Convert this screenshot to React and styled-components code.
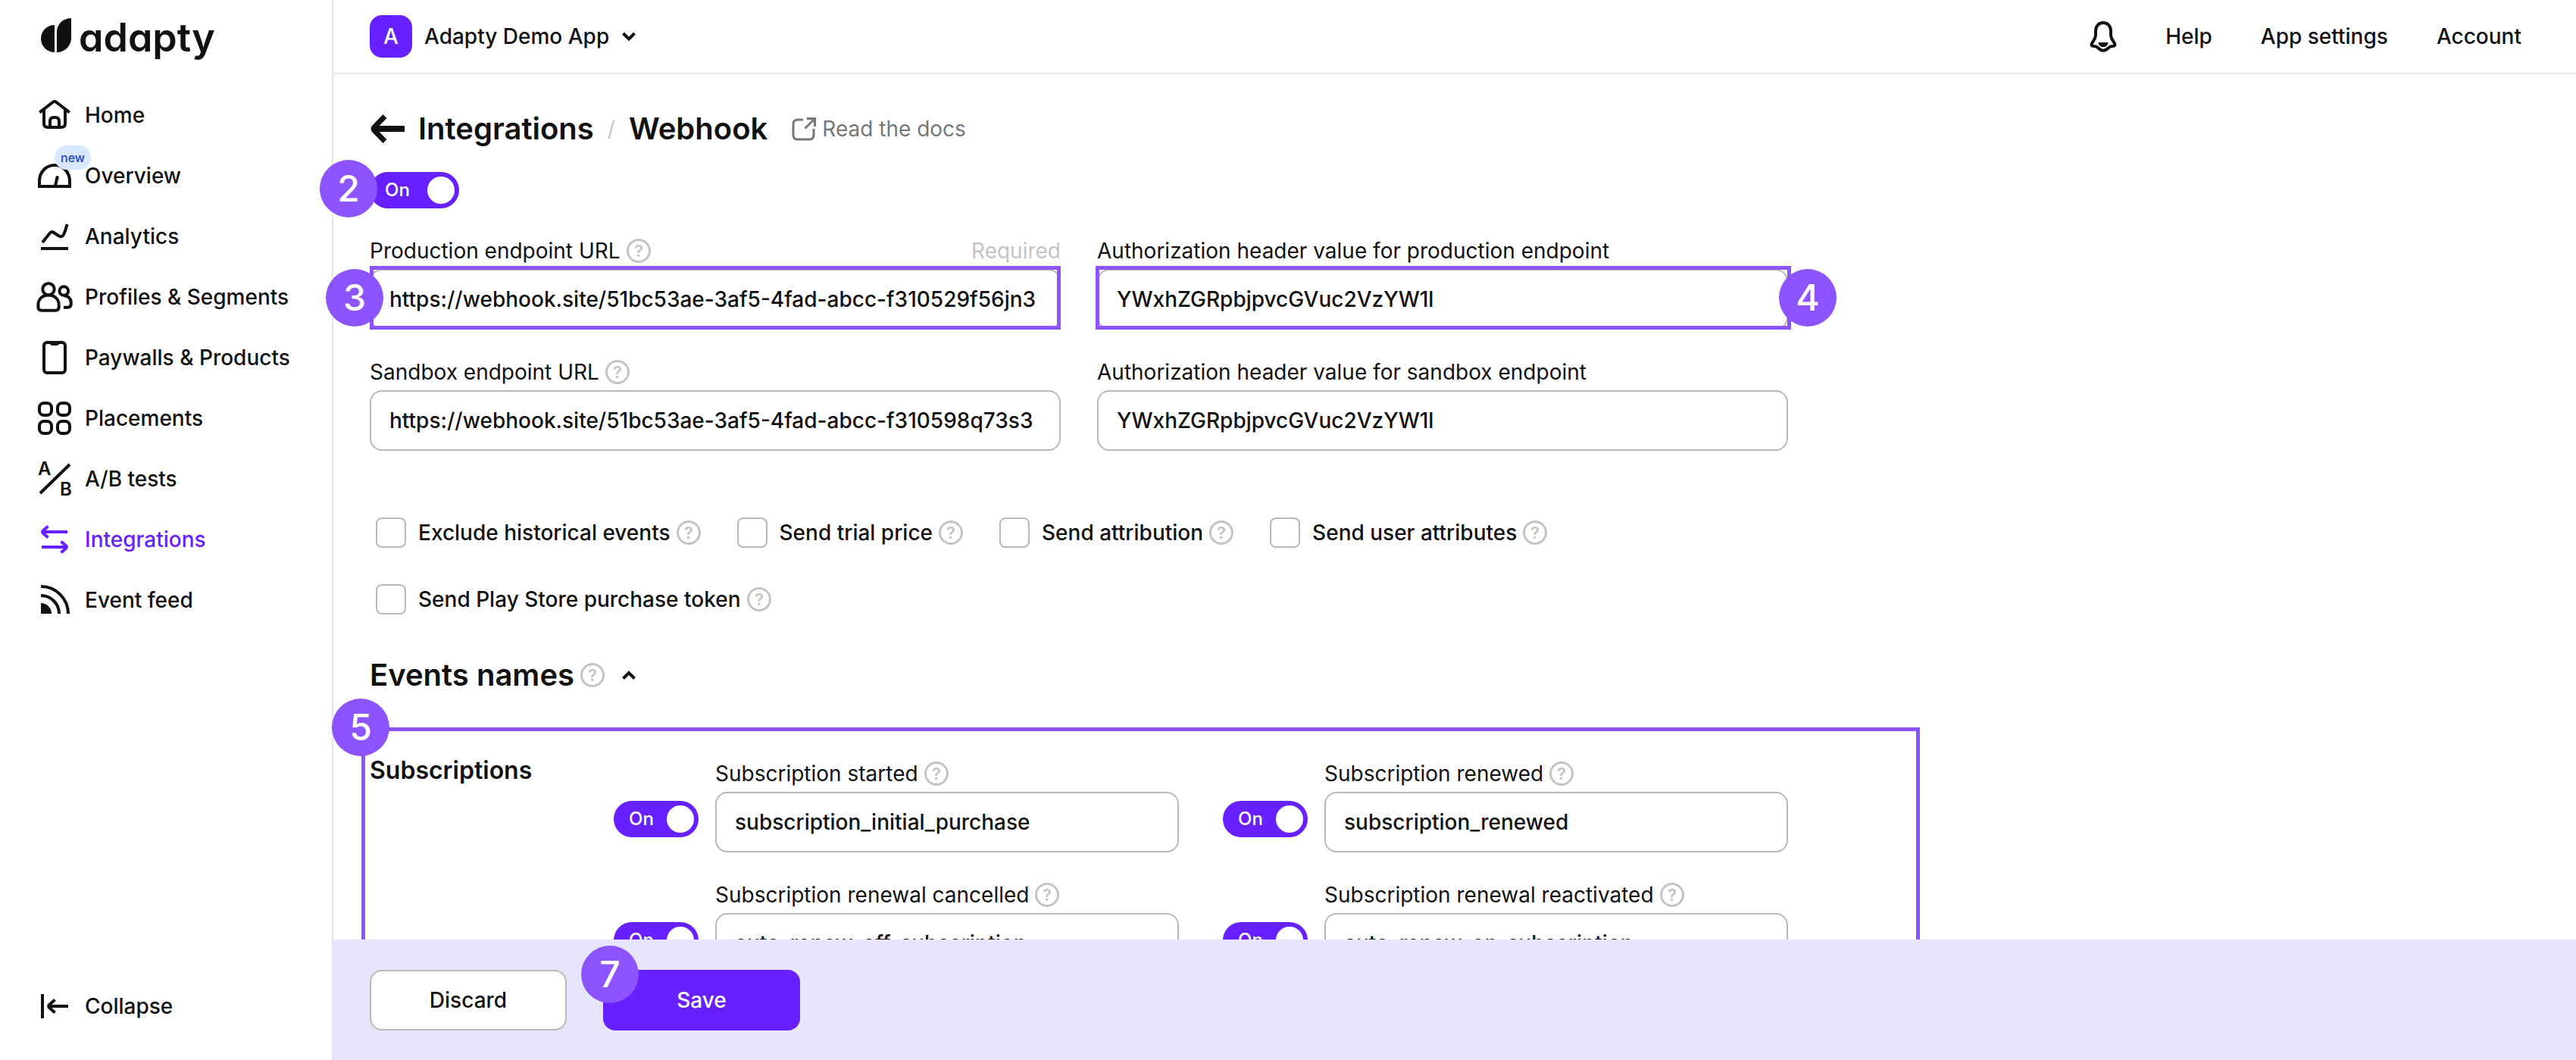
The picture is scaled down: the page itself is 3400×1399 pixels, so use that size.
import React, { useId, useState } from 'react';
import styled, { createGlobalStyle } from 'styled-components';

const color = {
  ink: '#111111',
  accent: '#6720ff',
  callout: '#8c54ff',
  line: '#e6e6e6',
  border: '#b8b8b8',
  muted: '#c4c4c4',
  grey: '#777777',
  bar: '#e7e5fb',
};

const GlobalStyle = createGlobalStyle`
  *, *::before, *::after { box-sizing: border-box; }
  body {
    margin: 0;
    background: #ffffff;
    color: ${color.ink};
    font-family: Inter, "Liberation Sans", sans-serif;
    font-size: 28px;
    line-height: 40px;
  }
  button, input { font: inherit; color: inherit; }
  button { cursor: pointer; }
  svg { display: block; flex: none; overflow: visible; }
`;

/* ---------- shell ---------- */

const Shell = styled.div`
  display: flex;
  height: 100vh;
  overflow: hidden;
`;

const Sidebar = styled.aside`
  display: flex;
  flex-direction: column;
  flex: none;
  width: 440px;
  padding: 16px 48px 47px;
  border-right: 2px solid ${color.line};
`;

const Logo = styled.a`
  display: flex;
  align-items: center;
  gap: 8px;
  height: 62px;
  padding-left: 6px;
  color: ${color.ink};
  text-decoration: none;
`;

const Wordmark = styled.span`
  padding-top: 6px;
  font-size: 52px;
  font-weight: 600;
  line-height: 56px;
  font-feature-settings: "cv11";
`;

const NavList = styled.ul`
  display: flex;
  flex-direction: column;
  gap: 32px;
  margin: 50px 0 0;
  padding: 0;
  list-style: none;
`;

const NavLink = styled.a`
  position: relative;
  display: flex;
  align-items: center;
  gap: 16px;
  height: 48px;
  color: ${(p) => (p.$active ? color.accent : color.ink)};
  font-weight: 500;
  white-space: nowrap;
  text-decoration: none;
`;

const NewBadge = styled.span`
  position: absolute;
  left: 24px;
  top: -16px;
  height: 32px;
  padding: 0 8px;
  border-radius: 16px;
  background: #d6e7ff;
  color: #1f44c4;
  font-size: 16px;
  line-height: 32px;
`;

const CollapseButton = styled.button`
  display: flex;
  align-items: center;
  gap: 16px;
  height: 48px;
  margin-top: auto;
  padding: 0;
  border: 0;
  background: none;
  font-weight: 500;
`;

const Main = styled.div`
  display: flex;
  flex: 1;
  flex-direction: column;
  min-width: 0;
`;

const TopBar = styled.header`
  display: flex;
  align-items: center;
  justify-content: space-between;
  flex: none;
  height: 98px;
  padding: 0 72px 0 48px;
  border-bottom: 2px solid ${color.line};
  font-weight: 500;
`;

const AppPicker = styled.button`
  display: flex;
  align-items: center;
  gap: 16px;
  padding: 0;
  border: 0;
  background: none;
  font-weight: 500;
`;

const AppBadge = styled.span`
  width: 56px;
  height: 56px;
  border-radius: 16px;
  background: ${color.accent};
  color: #ffffff;
  line-height: 56px;
  text-align: center;
`;

const TopLinks = styled.nav`
  display: flex;
  align-items: center;
  gap: 64px;
`;

const TopLink = styled.a`
  color: inherit;
  text-decoration: none;
`;

const IconButton = styled.button`
  display: flex;
  padding: 0;
  border: 0;
  background: none;
`;

/* ---------- page ---------- */

const Page = styled.main`
  flex: 1;
  min-height: 0;
  padding: 48px;
  overflow-x: visible;
  overflow-y: clip;
`;

const Form = styled.form`
  max-width: 1872px;
`;

const Crumbs = styled.div`
  display: flex;
  align-items: center;
  height: 48px;
  margin-bottom: 33px;
`;

const Title = styled.h1`
  display: flex;
  align-items: center;
  gap: 18px;
  margin: 0;
  font-size: 40px;
  font-weight: 600;
  line-height: 48px;
`;

const CrumbLink = styled.a`
  display: flex;
  align-items: center;
  gap: 16px;
  color: inherit;
  text-decoration: none;
`;

const Slash = styled.span`
  color: ${color.muted};
  font-size: 28px;
  font-weight: 400;
`;

const DocsLink = styled.a`
  display: flex;
  align-items: center;
  gap: 8px;
  margin-left: 32px;
  color: ${color.grey};
  text-decoration: none;
`;

const Switch = styled.label`
  position: relative;
  display: flex;
  align-items: center;
  justify-content: space-between;
  flex: none;
  width: ${(p) => (p.$wide ? 118 : 112)}px;
  height: 48px;
  padding: 0 6px 0 20px;
  border-radius: 24px;
  background: ${(p) => (p.$on ? color.accent : color.border)};
  color: #ffffff;
  font-size: 24px;
  font-weight: 500;
  cursor: pointer;
`;

const SwitchInput = styled.input`
  position: absolute;
  inset: 0;
  width: 100%;
  height: 100%;
  margin: 0;
  opacity: 0;
  cursor: pointer;
`;

const Knob = styled.span`
  width: 36px;
  height: 36px;
  border-radius: 50%;
  background: #ffffff;
`;

const FieldGrid = styled.div`
  display: grid;
  grid-template-columns: 1fr 1fr;
  gap: 36px 48px;
  margin-top: 36px;
`;

const LabelRow = styled.div`
  display: flex;
  align-items: center;
  gap: 8px;
  margin-bottom: 4px;
  white-space: nowrap;
`;

const Required = styled.span`
  margin-left: auto;
  color: ${color.muted};
`;

const InputWrap = styled.div`
  position: relative;
`;

const TextInput = styled.input`
  display: block;
  width: 100%;
  height: 80px;
  padding: 0 24px;
  border: 2px solid ${color.border};
  border-radius: 16px;
  outline: 0;
  background: #ffffff;
  font-weight: 500;
`;

const CheckList = styled.div`
  display: flex;
  flex-wrap: wrap;
  gap: 48px;
  margin-top: 88px;
  padding: 0 8px;
`;

const CheckItem = styled.div`
  display: flex;
  align-items: center;
  gap: 8px;
`;

const CheckLabel = styled.label`
  display: flex;
  align-items: center;
  gap: 16px;
  font-weight: 500;
  white-space: nowrap;
`;

const Checkbox = styled.input`
  appearance: none;
  width: 40px;
  height: 40px;
  margin: 0;
  border: 2px solid ${color.border};
  border-radius: 8px;
  background: #ffffff;
  &:checked { background: ${color.accent}; border-color: ${color.accent}; }
`;

const SectionHead = styled.div`
  display: flex;
  align-items: center;
  gap: 8px;
  height: 48px;
  margin: 56px 0 45px;
`;

const SectionTitle = styled.h2`
  margin: 0;
  font-size: 40px;
  font-weight: 600;
  line-height: 48px;
`;

const FoldButton = styled(IconButton)`
  margin-left: 14px;
`;

const EventSection = styled.section`
  position: relative;
  display: grid;
  grid-template-columns: 322px 1fr;
  padding: 41px 0;
`;

const GroupTitle = styled.h3`
  margin: 0;
  font-size: 32px;
  font-weight: 600;
  line-height: 32px;
`;

const EventGrid = styled.div`
  display: grid;
  grid-template-columns: 1fr 1fr;
  gap: 36px 58px;
`;

const EventRow = styled.div`
  display: flex;
  gap: 22px;
`;

const EventSwitch = styled.div`
  padding-top: 56px;
`;

const EventField = styled.div`
  flex: 1;
  min-width: 0;
`;

const ActionBar = styled.footer`
  position: relative;
  z-index: 2;
  display: flex;
  flex: none;
  gap: 48px;
  padding: 40px 48px 39px;
  background: ${color.bar};
`;

const Action = styled.button`
  position: relative;
  width: 260px;
  height: 80px;
  border: ${(p) => (p.$primary ? '0' : `2px solid ${color.border}`)};
  border-radius: 16px;
  background: ${(p) => (p.$primary ? color.accent : '#ffffff')};
  color: ${(p) => (p.$primary ? '#ffffff' : color.ink)};
  font-weight: 500;
`;

/* ---------- tour callouts, laid over the page ---------- */

const Outline = styled.div`
  position: absolute;
  inset: ${(p) => p.$inset};
  border: 5px solid ${color.callout};
  pointer-events: none;
`;

const Callout = styled.span`
  position: absolute;
  z-index: 1;
  left: ${(p) => p.$x};
  top: ${(p) => p.$y};
  width: 76px;
  height: 76px;
  border-radius: 50%;
  background: ${color.callout};
  color: #ffffff;
  font-size: 48px;
  font-weight: 500;
  line-height: 76px;
  text-align: center;
  transform: translate(-50%, -50%);
  pointer-events: none;
`;

/* ---------- icons ---------- */

const NavIcon = ({ children }) => (
  <svg width="48" height="48" viewBox="0 0 48 48" fill="none" stroke="currentColor" strokeWidth="4" aria-hidden="true">
    {children}
  </svg>
);

const LetterMark = styled.text`
  font-family: Inter, "Liberation Sans", sans-serif;
  font-size: 24px;
  font-weight: 600;
`;

const icons = {
  home: (
    <NavIcon>
      <path d="M4.3 20.3 21.5 7q2.5-1.9 5 0l17.200 13.300" />
      <path d="M10 17v18q0 5 5 5h18q5 0 5-5V17" />
      <path d="M18 40v-8q0-5 5-5h2q5 0 5 5v8" />
    </NavIcon>
  ),
  overview: (
    <NavIcon>
      <path d="M4 38v-7C4 19 13 10 24 10s20 9 20 21v7Z" />
      <path d="M25 37l2.800-12" />
      <circle cx="27.700" cy="26" r="2" fill="currentColor" stroke="none" />
    </NavIcon>
  ),
  analytics: (
    <NavIcon>
      <path d="M8 32 17.500 20q2.500-3 5.500-1l6.500 4.200q4.500 2.500 6.200-1.200Q38 18 40.500 8" />
      <path d="M6 40h36" />
    </NavIcon>
  ),
  profiles: (
    <NavIcon>
      <circle cx="16" cy="13.700" r="7.700" />
      <path d="M2.400 37v-3C2.400 27 8 21.500 16 21.500S29.700 27 29.700 34v3q0 4.700-4.700 4.700H7q-4.600 0-4.600-4.700Z" />
      <circle cx="36.300" cy="16" r="5.800" />
      <path d="M36 37.700h5q4.800 0 4.800-5V31q-.6-8-9.500-9" />
    </NavIcon>
  ),
  paywalls: (
    <NavIcon>
      <rect x="10" y="4" width="28" height="40" rx="4" />
      <path d="M18 3h12v2q0 3-3 3h-6q-3 0-3-3Z" fill="currentColor" stroke="none" />
    </NavIcon>
  ),
  placements: (
    <NavIcon>
      <rect x="4" y="4" width="16" height="16" rx="6" />
      <rect x="28" y="4" width="16" height="16" rx="6" />
      <rect x="4" y="28" width="16" height="16" rx="6" />
      <rect x="28" y="28" width="16" height="16" rx="6" />
    </NavIcon>
  ),
  ab: (
    <NavIcon>
      <path d="M5 43 44 5" />
      <LetterMark x="2" y="19" fill="currentColor" stroke="none">A</LetterMark>
      <LetterMark x="31" y="46" fill="currentColor" stroke="none">B</LetterMark>
    </NavIcon>
  ),
  integrations: (
    <NavIcon>
      <path d="M41 14H9M15.500 6.500 9 12.200q-2 1.800 0 3.600l6.500 5.700" />
      <path d="M7 34h32M32.500 26.500l6.500 5.700q2 1.800 0 3.600l-6.500 5.700" />
    </NavIcon>
  ),
  feed: (
    <NavIcon>
      <path d="M6 28a14 14 0 0 1 14 14H6Z" fill="currentColor" stroke="none" />
      <path d="M6 18a24 24 0 0 1 24 24" />
      <path d="M6 6a36 36 0 0 1 36 36" />
    </NavIcon>
  ),
  collapse: (
    <NavIcon>
      <path d="M8 8v32" />
      <path d="M42 24H17M24.500 15.500 17 22.300q-1.800 1.700 0 3.400l7.500 6.800" />
    </NavIcon>
  ),
};

const LeafMark = () => (
  <svg width="42" height="46" viewBox="0 0 42 46" fill="currentColor" aria-hidden="true">
    <path d="M18 9v36C8 45 0 37 0 27S8 9 18 9Z" />
    <path d="M21 45V18C21 8 29 0 40 0v26c0 11-9 19-19 19Z" />
  </svg>
);

const BellIcon = () => (
  <svg width="36" height="40" viewBox="2 2 36 40" fill="none" stroke="currentColor" strokeWidth="4" strokeLinejoin="round" aria-hidden="true">
    <path d="M20 4c-6.500 0-10 5-10 11v5c0 5-2 6.500-4.500 10.500-2 3.500-.5 4.500 2.500 4.500 3.500 0 4 1 6 3 3.500 3.500 8.500 3.500 12 0 2-2 2.500-3 6-3 3 0 4.500-1 2.500-4.500C32 26.500 30 25 30 20v-5c0-6-3.500-11-10-11Z" />
    <path d="M13.500 30h13c-.5 4-3 6-6.500 6s-6-2-6.500-6Z" fill="currentColor" stroke="none" />
  </svg>
);

const Chevron = ({ up }) => (
  <svg width="20" height="14" viewBox="0 0 20 14" fill="none" stroke="currentColor" strokeWidth="4" aria-hidden="true">
    <path d={up ? 'M2.500 11.500 10 4l7.500 7.500' : 'M2.500 3 10 10.500 17.500 3'} />
  </svg>
);

const BackArrow = () => (
  <svg width="48" height="40" viewBox="0 0 48 40" fill="none" stroke="currentColor" strokeWidth="8" aria-hidden="true">
    <path d="M46 20H8" />
    <path d="M20 3.500 6.500 17.300q-2.500 2.700 0 5.400L20 36.500" strokeWidth="7" />
  </svg>
);

const ExternalIcon = () => (
  <svg width="32" height="32" viewBox="0 0 32 32" fill="none" stroke="currentColor" strokeWidth="3" aria-hidden="true">
    <path d="M15 4H8Q2 4 2 10v14q0 6 6 6h15q6 0 6-6v-8" />
    <path d="M20 2.500h10.500V13M30 3 17.500 15.500" />
  </svg>
);

const HelpMark = styled.text`
  font-family: Inter, "Liberation Sans", sans-serif;
  font-size: 22px;
  font-weight: 600;
`;

const HelpIcon = () => (
  <svg width="32" height="32" viewBox="0 0 32 32" aria-hidden="true">
    <circle cx="16" cy="16" r="14.500" fill="none" stroke={color.muted} strokeWidth="3" />
    <HelpMark x="16" y="24" textAnchor="middle" fill={color.muted}>?</HelpMark>
  </svg>
);

/* ---------- parts ---------- */

const Toggle = ({ name, wide }) => {
  const [on, setOn] = useState(true);
  return (
    <Switch $wide={wide} $on={on}>
      <SwitchInput type="checkbox" role="switch" aria-label={name} checked={on} onChange={() => setOn(!on)} />
      <span>{on ? 'On' : 'Off'}</span>
      <Knob />
    </Switch>
  );
};

const Field = ({ label, value, help, required, children }) => {
  const id = useId();
  return (
    <div>
      <LabelRow>
        <label htmlFor={id}>{label}</label>
        {help && <HelpIcon />}
        {required && <Required>Required</Required>}
      </LabelRow>
      <InputWrap>
        <TextInput id={id} type="text" defaultValue={value} />
        {children}
      </InputWrap>
    </div>
  );
};

const nav = [
  ['Home', 'home'],
  ['Overview', 'overview'],
  ['Analytics', 'analytics'],
  ['Profiles & Segments', 'profiles'],
  ['Paywalls & Products', 'paywalls'],
  ['Placements', 'placements'],
  ['A/B tests', 'ab'],
  ['Integrations', 'integrations'],
  ['Event feed', 'feed'],
];

const options = [
  'Exclude historical events',
  'Send trial price',
  'Send attribution',
  'Send user attributes',
  'Send Play Store purchase token',
];

const events = [
  ['Subscription started', 'subscription_initial_purchase'],
  ['Subscription renewed', 'subscription_renewed'],
  ['Subscription renewal cancelled', 'auto_renew_off_subscription'],
  ['Subscription renewal reactivated', 'auto_renew_on_subscription'],
];

export default function App() {
  return (
    <Shell>
      <GlobalStyle />
      <Sidebar>
        <Logo href="#">
          <LeafMark />
          <Wordmark>adapty</Wordmark>
        </Logo>
        <nav>
          <NavList>
            {nav.map(([label, icon]) => (
              <li key={label}>
                <NavLink href="#" $active={icon === 'integrations'}>
                  {icons[icon]}
                  {label}
                  {icon === 'overview' && <NewBadge>new</NewBadge>}
                </NavLink>
              </li>
            ))}
          </NavList>
        </nav>
        <CollapseButton type="button">
          {icons.collapse}
          Collapse
        </CollapseButton>
      </Sidebar>

      <Main>
        <TopBar>
          <AppPicker type="button">
            <AppBadge>A</AppBadge>
            Adapty Demo App
            <Chevron />
          </AppPicker>
          <TopLinks>
            <IconButton type="button" aria-label="Notifications">
              <BellIcon />
            </IconButton>
            <TopLink href="#">Help</TopLink>
            <TopLink href="#">App settings</TopLink>
            <TopLink href="#">Account</TopLink>
          </TopLinks>
        </TopBar>

        <Page>
          <Form id="webhook" onSubmit={(e) => e.preventDefault()}>
            <Crumbs>
              <Title>
                <CrumbLink href="#">
                  <BackArrow />
                  Integrations
                </CrumbLink>
                <Slash>/</Slash>
                Webhook
              </Title>
              <DocsLink href="#">
                <ExternalIcon />
                Read the docs
              </DocsLink>
            </Crumbs>

            <InputWrap>
              <Toggle name="Webhook integration" wide />
              <Callout $x="-28px" $y="22px">2</Callout>
            </InputWrap>

            <FieldGrid>
              <Field label="Production endpoint URL" value="https://webhook.site/51bc53ae-3af5-4fad-abcc-f310529f56jn3" help required>
                <Outline $inset="-4px 0 0 0" />
                <Callout $x="-20px" $y="38px">3</Callout>
              </Field>
              <Field label="Authorization header value for production endpoint" value="YWxhZGRpbjpvcGVuc2VzYW1l">
                <Outline $inset="-4px -4px 0 -2px" />
                <Callout $x="calc(100% + 26px)" $y="38px">4</Callout>
              </Field>
              <Field label="Sandbox endpoint URL" value="https://webhook.site/51bc53ae-3af5-4fad-abcc-f310598q73s3" help />
              <Field label="Authorization header value for sandbox endpoint" value="YWxhZGRpbjpvcGVuc2VzYW1l" />
            </FieldGrid>

            <CheckList>
              {options.map((label) => (
                <CheckItem key={label}>
                  <CheckLabel>
                    <Checkbox type="checkbox" />
                    {label}
                  </CheckLabel>
                  <HelpIcon />
                </CheckItem>
              ))}
            </CheckList>

            <SectionHead>
              <SectionTitle>Events names</SectionTitle>
              <HelpIcon />
              <FoldButton type="button" aria-label="Fold events names">
                <Chevron up />
              </FoldButton>
            </SectionHead>

            <EventSection>
              <GroupTitle>Subscriptions</GroupTitle>
              <EventGrid>
                {events.map(([label, value]) => (
                  <EventRow key={label}>
                    <EventSwitch>
                      <Toggle name={label} />
                    </EventSwitch>
                    <EventField>
                      <Field label={label} value={value} help />
                    </EventField>
                  </EventRow>
                ))}
              </EventGrid>
              <Outline $inset="0 -174px 0 -11px" />
              <Callout $x="-12px" $y="0px">5</Callout>
            </EventSection>
          </Form>
        </Page>

        <ActionBar>
          <Action type="reset" form="webhook">Discard</Action>
          <Action type="submit" form="webhook" $primary>
            <Callout $x="9px" $y="6px">7</Callout>
            Save
          </Action>
        </ActionBar>
      </Main>
    </Shell>
  );
}
